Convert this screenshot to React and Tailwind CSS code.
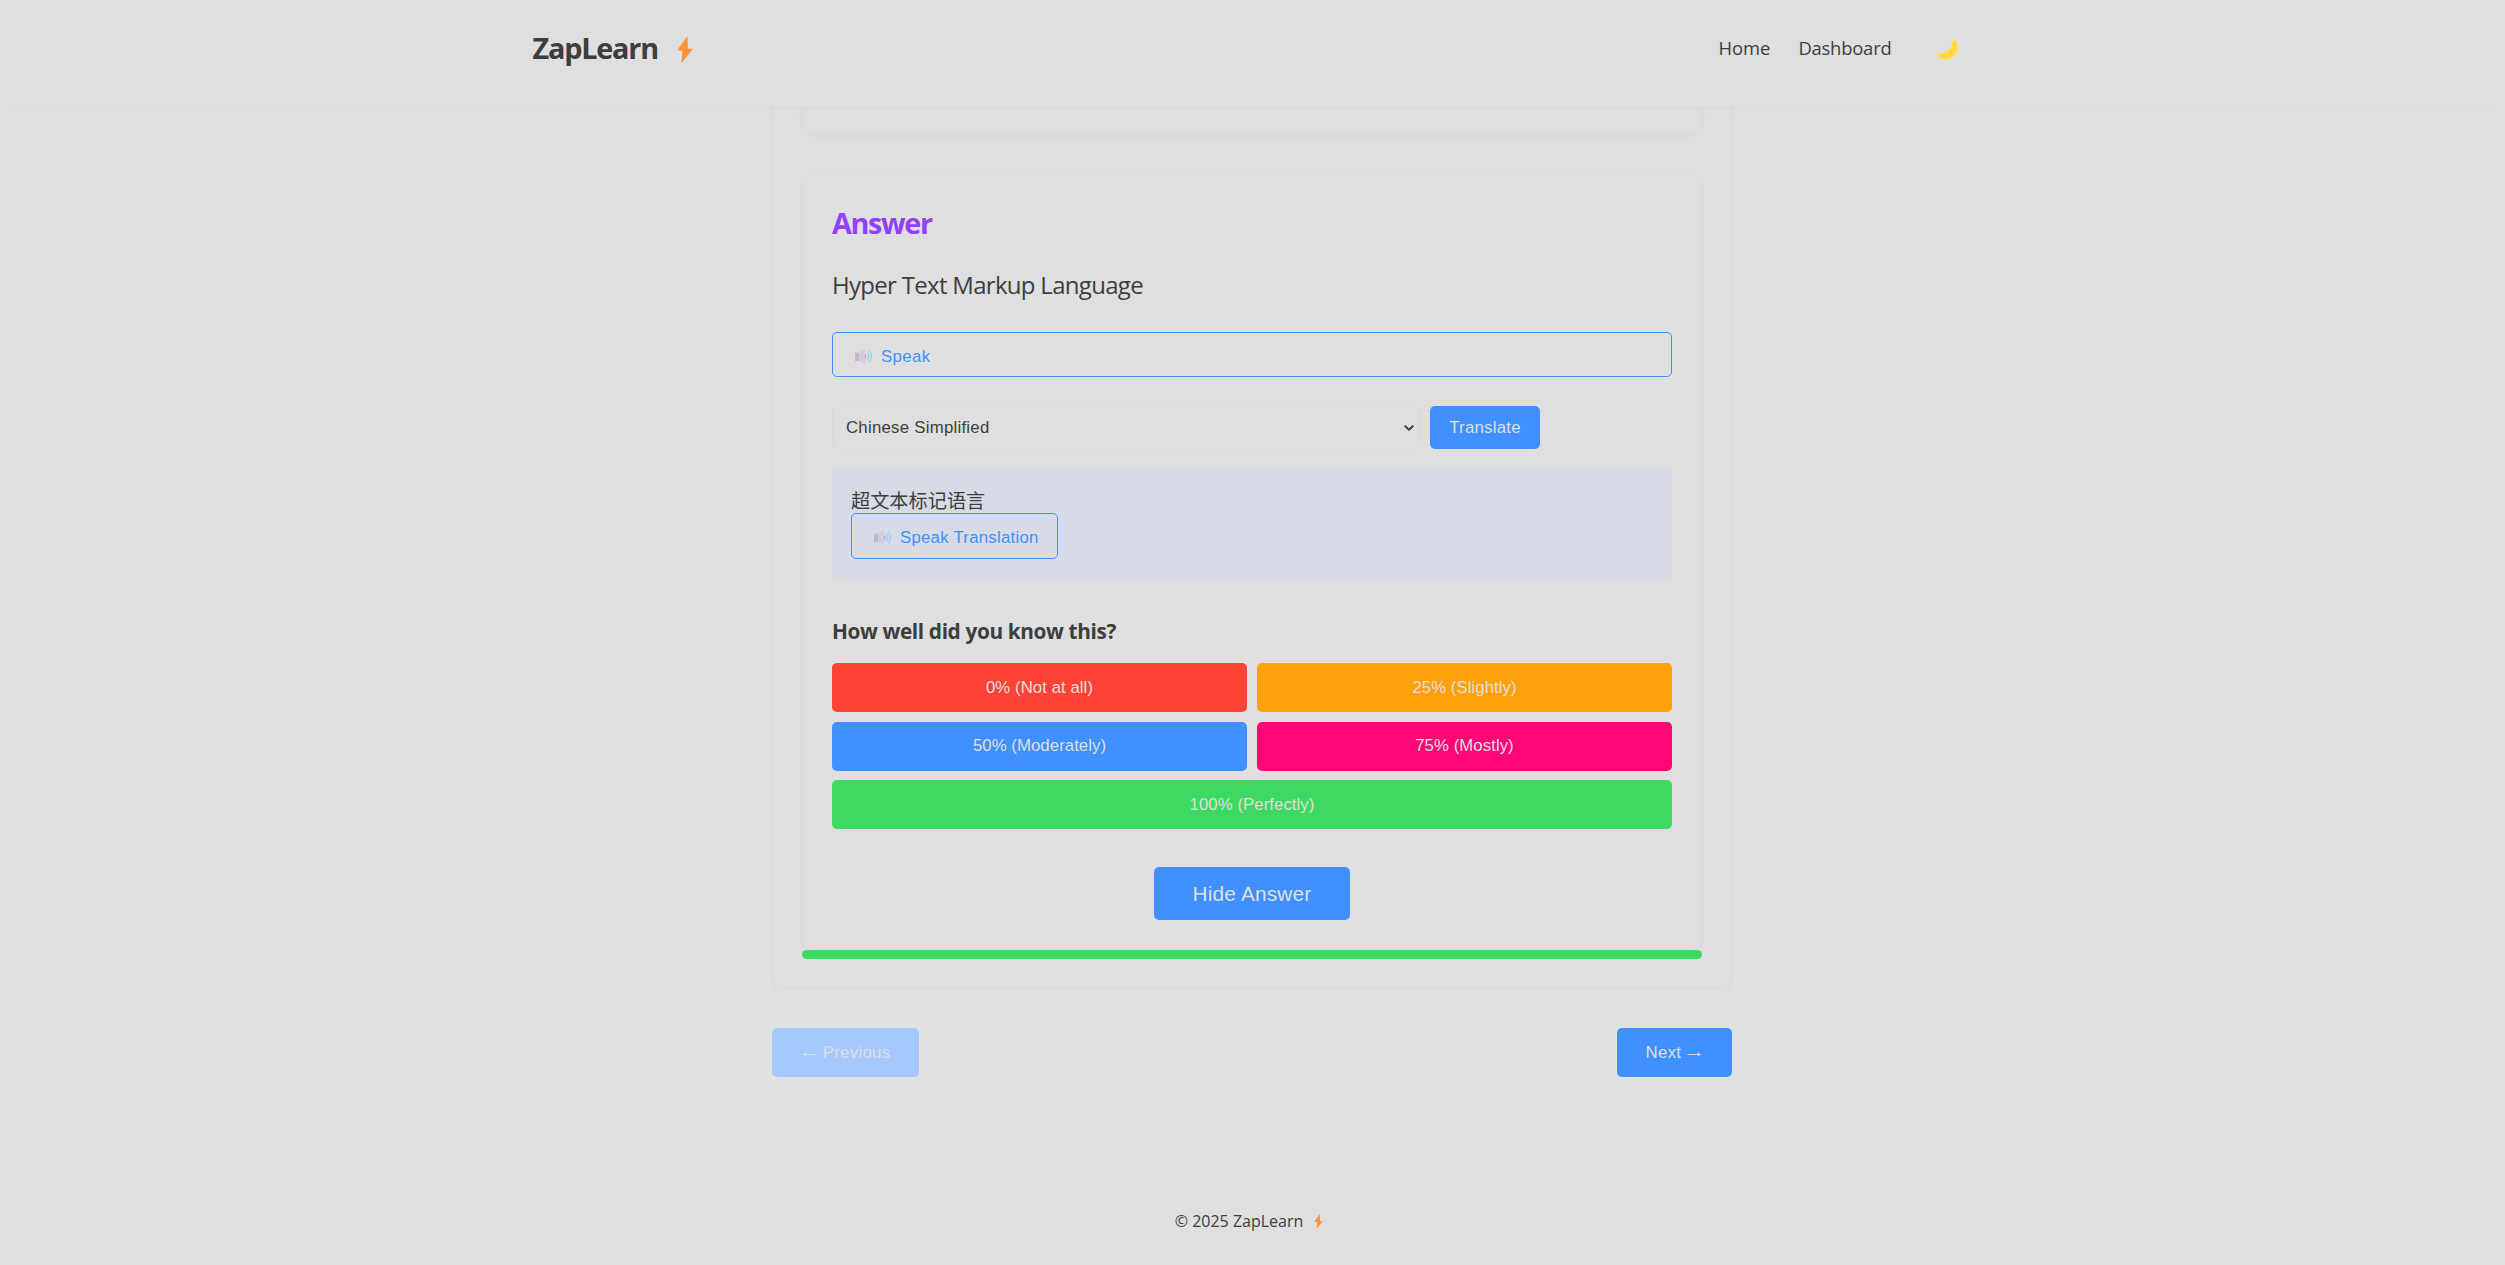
function Bolt({ className }) {
  return (
    <svg viewBox="0 0 16 27" preserveAspectRatio="none" className={className} aria-hidden="true">
      <path d="M10.500 0 0 14.500h5.300L4.600 27 16 12.800h-5.200z" fill="#ff9138" />
    </svg>
  );
}

function Moon() {
  return (
    <svg viewBox="0 0 22 22" className="h-[22px] w-[22px]" aria-hidden="true">
      <path
        d="M16.800 0C20.300 2.200 22.100 5.700 21.800 10c-.5 6.600-5.300 11.600-11.600 11.600C5.800 21.600 1.700 19.200 0 15c3.200.9 7.200.6 10.700-1.800C14.900 10.300 17.300 5.400 16.800 0z"
        fill="#ffde43"
      />
      <g fill="#ffca3e">
        <circle cx="15.200" cy="14.700" r="2.300" />
        <circle cx="8" cy="17.700" r="1.500" />
        <circle cx="18.700" cy="6.600" r="1.400" />
        <circle cx="18.800" cy="11.300" r="1" />
      </g>
    </svg>
  );
}

function Speaker() {
  return (
    <svg viewBox="0 0 17 15" className="h-[15px] w-[17px] shrink-0" aria-hidden="true">
      <path d="M0 3.500h4v8.500H0z" fill="#c2b8cc" />
      <path d="M4 3.500 9.800 .6v13.800L4 12z" fill="#d5cade" />
      <path d="M9.800 5.300c2.400.5 2.400 4.400 0 4.900z" fill="#b9afc6" />
      <path
        d="M12.400 4c1.900 1.800 1.900 5.200 0 7M14.200 1.800c3 3 3 8.400 0 11.400"
        fill="none"
        stroke="#8fd0fb"
        strokeWidth="1.200"
      />
    </svg>
  );
}

const ratings = [
  { label: "0% (Not at all)", className: "bg-[#ff4436]" },
  { label: "25% (Slightly)", className: "bg-[#ffa107]" },
  { label: "50% (Moderately)", className: "bg-[#4091ff] pb-px" },
  { label: "75% (Mostly)", className: "bg-[#ff0677] pb-px" },
  { label: "100% (Perfectly)", className: "col-span-2 -mt-px bg-[#3ed962]" },
];

export default function App() {
  return (
    <div className="flex h-[1265px] flex-col overflow-hidden bg-[#e1e1e1] font-['Open_Sans','Noto_Sans_CJK_SC',sans-serif] text-[#3d3d3d]">
      <header className="relative z-10 h-[106px] shrink-0 bg-[#dfdfdf] shadow-[0_2px_10px_rgba(0,0,0,0.03)]">
        <div className="mx-auto flex h-24 w-[1440px] items-center justify-between pr-[15px]">
          <div className="flex items-center text-[28.8px] font-bold tracking-[-1.2px]">
            ZapLearn
            <Bolt className="mt-[3px] ml-[19px] h-[27px] w-4" />
          </div>
          <nav className="flex items-center text-[18.4px]">
            <a>Home</a>
            <a className="ml-[28px] tracking-[-0.2px]">Dashboard</a>
            <button className="mt-[3px] ml-[44px]">
              <Moon />
            </button>
          </nav>
        </div>
      </header>

      <main className="mx-auto flex w-[961px] flex-1 flex-col pr-px">
        <div className="h-[882px] rounded-b-[10px] border border-t-0 border-[#dadada] bg-[#dfdfdf] px-[29px] shadow-[0_2px_10px_rgba(0,0,0,0.025)]">
          <div className="h-7 rounded-b-[8px] border border-t-0 border-[#dadada] shadow-[0_2px_8px_rgba(0,0,0,0.025)]" />

          <section className="mt-[39px] h-[776px] rounded-[8px] border border-[#dbdbdb] bg-[#dfdfdf] px-[29px] pt-7 shadow-[0_2px_8px_rgba(0,0,0,0.02)]">
            <h2 className="text-[28.8px] leading-[42px] font-bold tracking-[-1.35px] text-[#923fff]">Answer</h2>
            <p className="mt-[22px] text-2xl leading-[38px] tracking-[-0.7px]">Hyper Text Markup Language</p>

            <button className="mt-7 flex h-[45px] w-full items-center rounded-[5px] border border-[#4091ff] pt-[4px] pl-[22px] font-['Liberation_Sans',sans-serif] text-[16.8px] tracking-[0.4px] text-[#4091ff]">
              <Speaker />
              <span className="ml-[9px]">Speak</span>
            </button>

            <div className="mt-[29px] flex h-[43px] gap-[10px] font-['Liberation_Sans',sans-serif] text-[16.8px] tracking-[0.25px]">
              <div className="flex w-[588px] items-center justify-between rounded-[5px] border border-[#dbdbdb] pr-[5px] pl-[13px]">
                <span>Chinese Simplified</span>
                <svg viewBox="0 0 10 6" className="h-[6px] w-[10px]" aria-hidden="true">
                  <path d="M.7.700 5 4.700 9.300.700" fill="none" stroke="#3d3d3d" strokeWidth="1.900" />
                </svg>
              </div>
              <button className="w-[110px] rounded-[5px] bg-[#4091ff] text-[#dfdfdf]">Translate</button>
            </div>

            <div className="mt-[19px] h-[110px] rounded-[5px] bg-[#d7dbe6] px-[19px] pt-[20px] text-[19.2px]">
              <p className="leading-[26px]">超文本标记语言</p>
              <button className="-mt-px flex h-[46px] w-[207px] items-center rounded-[5px] border border-[#4091ff] pt-[3px] pl-[22px] font-['Liberation_Sans',sans-serif] text-[16.8px] tracking-[0.25px] text-[#4091ff]">
                <Speaker />
                <span className="ml-[9px]">Speak Translation</span>
              </button>
            </div>

            <h3 className="mt-[37px] text-[20.8px] leading-8 font-bold tracking-[-0.37px]">How well did you know this?</h3>
            <div className="mt-4 grid grid-cols-2 gap-[10px] font-['Liberation_Sans',sans-serif] text-[16.8px] tracking-[0.05px] text-[#dfdfdf]">
              {ratings.map((rating) => (
                <button key={rating.label} className={`h-[49px] rounded-[5px] ${rating.className}`}>
                  {rating.label}
                </button>
              ))}
            </div>

            <button className="mx-auto mt-[38px] block h-[53px] w-[196px] rounded-[5px] bg-[#4091ff] font-['Liberation_Sans',sans-serif] text-[20.8px] tracking-[0.2px] text-[#dfdfdf]">
              Hide Answer
            </button>
          </section>

          <div className="mt-px h-[9px] rounded-full bg-[#3ed962]" />
        </div>

        <div className="mt-10 flex justify-between font-['Liberation_Sans',sans-serif] text-[16.8px] tracking-[0.3px] text-[#dfdfdf]">
          <button className="h-[49px] w-[147px] rounded-[5px] bg-[#a5c8ff]">
            <span className="inline-block -translate-y-px scale-x-[1.3]">←</span> Previous
          </button>
          <button className="h-[49px] w-[115px] rounded-[5px] bg-[#4091ff]">
            Next <span className="inline-block -translate-y-px scale-x-[1.3]">→</span>
          </button>
        </div>
      </main>

      <footer className="flex h-[111px] shrink-0 items-start justify-center bg-[#dfdfdf] pt-[55px] pr-[7px] text-base">
        © 2025 ZapLearn
        <Bolt className="mt-[5px] ml-[11px] h-[15px] w-[9px]" />
      </footer>
    </div>
  );
}
